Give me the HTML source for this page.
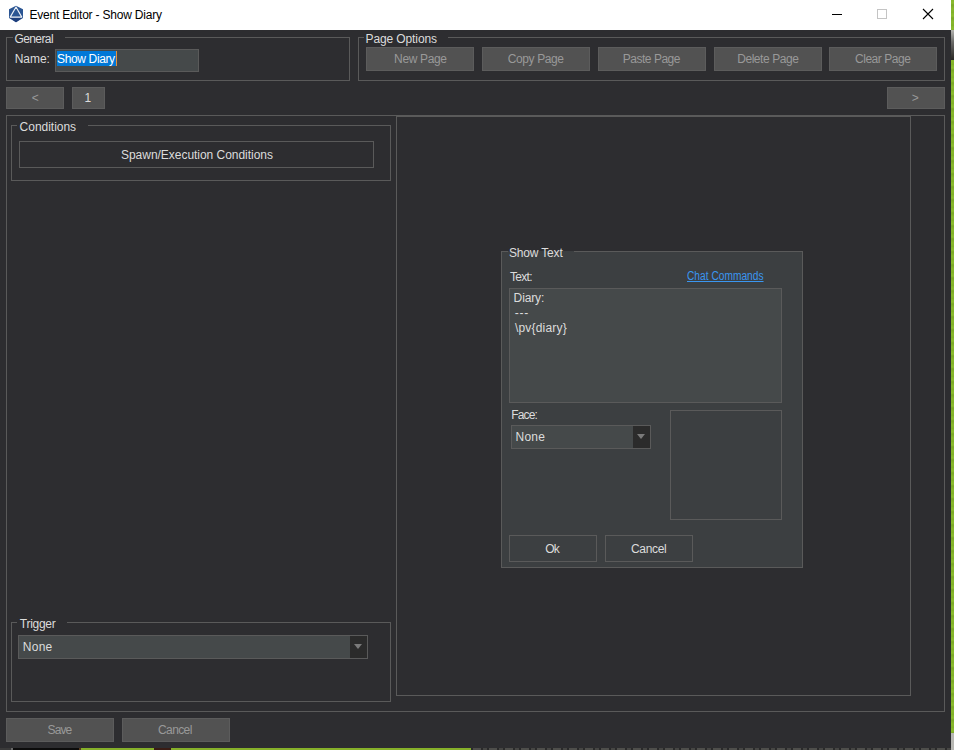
<!DOCTYPE html>
<html>
<head>
<meta charset="utf-8">
<title>Event Editor - Show Diary</title>
<style>
html,body{margin:0;padding:0;}
body{width:954px;height:750px;overflow:hidden;position:relative;background:#2d2d30;
  font-family:"Liberation Sans",sans-serif;font-size:12px;color:#dcdcdc;}
.abs{position:absolute;box-sizing:border-box;}
.t{white-space:nowrap;line-height:14px;height:14px;}
#win{left:0;top:0;width:951px;height:748px;background:#2d2d30;}
#title{left:0;top:0;width:951px;height:30px;background:#fff;}
.gb{border:1px solid #5a5a5a;}
.gap{height:1px;background:#2d2d30;}
.btn{border:1px solid #5a5a5a;background:#2d2d30;}
.btn.dis{background:#525252;border-color:#5c5c5c;}
.combo{background:#45494a;border:1px solid #5a5a5a;}
.arr{background:#2b2b2b;}
.tri{width:0;height:0;border-left:4.7px solid transparent;border-right:4.7px solid transparent;border-top:5.3px solid #7a7a7a;}
</style>
</head>
<body>
<!-- desktop peeking out behind the window -->
<div class="abs" style="left:951px;top:0;width:3px;height:750px;background:repeating-linear-gradient(180deg,#84b62a 0,#8cbc30 3px,#7aa826 5px,#88b82c 9px,#80b028 13px)"></div>
<div class="abs" style="left:951px;top:30px;width:3px;height:30px;background:linear-gradient(#b4b4b0,#6a6a68 40%,#2a2824)"></div>
<div class="abs" style="left:951px;top:733px;width:3px;height:17px;background:#b8b8b4"></div>
<div class="abs" style="left:0;top:748px;width:951px;height:2px;background:#3a3a3a"></div>
<div class="abs" style="left:11px;top:748px;width:2px;height:2px;background:#6a6a6a"></div>
<div class="abs" style="left:13px;top:748px;width:66px;height:2px;background:#0c0c0c"></div>
<div class="abs" style="left:79px;top:748px;width:2px;height:2px;background:#5a3a1c"></div>
<div class="abs" style="left:81px;top:748px;width:390px;height:2px;background:#86b02a"></div>
<div class="abs" style="left:154px;top:748px;width:17px;height:2px;background:#3a1c14"></div>
<div class="abs" style="left:471px;top:748px;width:480px;height:2px;background:repeating-linear-gradient(90deg,#2a2a2a 0,#2a2a2a 2px,#4e4e4b 2px,#4e4e4b 10px,#2a2a2a 10px,#2a2a2a 12px,#464644 12px,#464644 16px)"></div>

<div class="abs" id="win">
  <div class="abs" id="title">
    <svg class="abs" style="left:0;top:0" width="32" height="30" viewBox="0 0 32 30">
      <polygon points="16,5.7 23,9.2 23,17.9 16,22.2 9,17.9 9,9.2" fill="#2b5593"/>
      <polygon points="9.3,17.6 22.7,17.6 16,22.2" fill="#1f3f7c"/>
      <polygon points="16,7.0 21.8,17.1 10.2,17.1" fill="none" stroke="#edf1f7" stroke-width="1.15" stroke-linejoin="round"/>
    </svg>
    <svg class="abs" style="left:820px;top:0" width="131" height="30" viewBox="0 0 131 30">
      <path d="M12 14.5H22" stroke="#000" stroke-width="1" fill="none"/>
      <rect x="57.5" y="9.5" width="9" height="9" stroke="#c4c4c4" stroke-width="1" fill="none"/>
      <path d="M103 9L113 19M113 9L103 19" stroke="#000" stroke-width="1.1" fill="none"/>
    </svg>
  </div>

  <!-- General -->
  <div class="abs gb" style="left:6px;top:37px;width:344px;height:44px"></div>
  <div class="abs gap" style="left:13px;top:37px;width:52px"></div>
  <div class="abs" style="left:55px;top:49px;width:144px;height:23px;background:#45494a;border:1px solid #5a5a5a"></div>
  <div class="abs" style="left:57px;top:51px;width:59px;height:15px;background:#0078d7"></div>
  <div class="abs" style="left:116px;top:51px;width:1px;height:15px;background:#e8913a"></div>

  <!-- Page Options -->
  <div class="abs gb" style="left:358px;top:37px;width:587px;height:44px"></div>
  <div class="abs gap" style="left:364px;top:37px;width:84px"></div>
  <div class="abs btn dis" style="left:366px;top:47px;width:108px;height:24px"></div>
  <div class="abs btn dis" style="left:482px;top:47px;width:108px;height:24px"></div>
  <div class="abs btn dis" style="left:598px;top:47px;width:108px;height:24px"></div>
  <div class="abs btn dis" style="left:714px;top:47px;width:108px;height:24px"></div>
  <div class="abs btn dis" style="left:829px;top:47px;width:108px;height:24px"></div>

  <!-- pager -->
  <div class="abs btn dis" style="left:6px;top:87px;width:58px;height:22px"></div>
  <div class="abs btn dis" style="left:72px;top:87px;width:33px;height:22px"></div>
  <div class="abs btn dis" style="left:887px;top:87px;width:58px;height:22px"></div>

  <!-- main panel -->
  <div class="abs gb" style="left:6px;top:115px;width:939px;height:597px"></div>
  <div class="abs gb" style="left:396px;top:116px;width:515px;height:580px"></div>

  <!-- Conditions -->
  <div class="abs gb" style="left:11px;top:125px;width:380px;height:56px"></div>
  <div class="abs gap" style="left:17px;top:125px;width:71px"></div>
  <div class="abs btn" style="left:19px;top:141px;width:355px;height:27px"></div>

  <!-- Trigger -->
  <div class="abs gb" style="left:11px;top:622px;width:380px;height:80px"></div>
  <div class="abs gap" style="left:17px;top:622px;width:50px"></div>
  <div class="abs combo" style="left:18px;top:635px;width:350px;height:24px"></div>
  <div class="abs arr" style="left:350px;top:636px;width:17px;height:22px"></div>
  <div class="abs tri" style="left:354px;top:644px"></div>

  <!-- bottom buttons -->
  <div class="abs btn dis" style="left:6px;top:718px;width:108px;height:24px"></div>
  <div class="abs btn dis" style="left:122px;top:718px;width:108px;height:24px"></div>

  <!-- dialog -->
  <div class="abs" style="left:501px;top:251px;width:302px;height:317px;background:#3c3f41;border:1px solid #5a5a5a"></div>
  <div class="abs gap" style="left:508px;top:251px;width:66px;background:#3c3f41"></div>
  <div class="abs" style="left:509px;top:288px;width:273px;height:115px;background:#45494a;border:1px solid #5a5a5a"></div>
  <div class="abs combo" style="left:511px;top:425px;width:140px;height:24px"></div>
  <div class="abs arr" style="left:633px;top:426px;width:17px;height:22px"></div>
  <div class="abs tri" style="left:636.8px;top:434px"></div>
  <div class="abs gb" style="left:670px;top:410px;width:112px;height:110px"></div>
  <div class="abs btn" style="left:509px;top:535px;width:88px;height:27px;background:#3c3f41"></div>
  <div class="abs btn" style="left:605px;top:535px;width:88px;height:27px;background:#3c3f41"></div>
  <div class="abs t" id="t_chat" style="left:686.5px;top:269px;color:#3a96f0;text-decoration:underline;transform:scaleX(0.85);transform-origin:0 0">Chat Commands</div>

<div class="abs t" id="t_title" style="left:29.40px;top:8.00px;color:#000;letter-spacing:-0.195px;">Event Editor - Show Diary</div>
<div class="abs t" id="t_general" style="left:14.40px;top:32.00px;color:#dcdcdc;letter-spacing:-0.583px;">General</div>
<div class="abs t" id="t_name" style="left:14.70px;top:52.00px;color:#dcdcdc;letter-spacing:-0.025px;">Name:</div>
<div class="abs t" id="t_showdiary" style="left:57.10px;top:52.00px;color:#fff;letter-spacing:-0.370px;">Show Diary</div>
<div class="abs t" id="t_pageopt" style="left:365.50px;top:32.00px;color:#dcdcdc;letter-spacing:-0.109px;">Page Options</div>
<div class="abs t" id="t_newpage" style="left:394.10px;top:52.00px;color:#999999;letter-spacing:-0.357px;">New Page</div>
<div class="abs t" id="t_copypage" style="left:507.80px;top:52.00px;color:#999999;letter-spacing:-0.400px;">Copy Page</div>
<div class="abs t" id="t_pastepage" style="left:622.80px;top:52.00px;color:#999999;letter-spacing:-0.489px;">Paste Page</div>
<div class="abs t" id="t_deletepage" style="left:737.20px;top:52.00px;color:#999999;letter-spacing:-0.440px;">Delete Page</div>
<div class="abs t" id="t_clearpage" style="left:855.00px;top:52.00px;color:#999999;letter-spacing:-0.467px;">Clear Page</div>
<div class="abs t" id="t_lt" style="left:31.80px;top:91.00px;color:#999999;letter-spacing:0.000px;">&lt;</div>
<div class="abs t" id="t_one" style="left:84.50px;top:91.00px;color:#dcdcdc;letter-spacing:0.000px;">1</div>
<div class="abs t" id="t_gt" style="left:911.80px;top:91.00px;color:#999999;letter-spacing:0.000px;">&gt;</div>
<div class="abs t" id="t_conditions" style="left:19.60px;top:120.00px;color:#dcdcdc;letter-spacing:-0.022px;">Conditions</div>
<div class="abs t" id="t_spawn" style="left:121.00px;top:148.00px;color:#dcdcdc;letter-spacing:-0.032px;">Spawn/Execution Conditions</div>
<div class="abs t" id="t_trigger" style="left:19.80px;top:617.00px;color:#dcdcdc;letter-spacing:-0.267px;">Trigger</div>
<div class="abs t" id="t_none1" style="left:22.80px;top:640.00px;color:#dcdcdc;letter-spacing:0.267px;">None</div>
<div class="abs t" id="t_save" style="left:47.60px;top:723.00px;color:#999999;letter-spacing:-0.933px;">Save</div>
<div class="abs t" id="t_cancel1" style="left:158.00px;top:723.00px;color:#999999;letter-spacing:-0.600px;">Cancel</div>
<div class="abs t" id="t_showtext" style="left:508.90px;top:246.00px;color:#dcdcdc;letter-spacing:-0.162px;">Show Text</div>
<div class="abs t" id="t_textlbl" style="left:509.90px;top:270.00px;color:#dcdcdc;letter-spacing:-0.675px;">Text:</div>
<div class="abs t" id="t_diary" style="left:513.60px;top:291.00px;color:#dcdcdc;letter-spacing:-0.120px;">Diary:</div>
<div class="abs t" id="t_dashes" style="left:514.80px;top:306.00px;color:#dcdcdc;letter-spacing:0.700px;">---</div>
<div class="abs t" id="t_pv" style="left:515.00px;top:321.00px;color:#dcdcdc;letter-spacing:0.178px;">\pv{diary}</div>
<div class="abs t" id="t_face" style="left:511.30px;top:408.00px;color:#dcdcdc;letter-spacing:-0.875px;">Face:</div>
<div class="abs t" id="t_none2" style="left:515.60px;top:430.00px;color:#dcdcdc;letter-spacing:0.200px;">None</div>
<div class="abs t" id="t_ok" style="left:545.30px;top:542.00px;color:#dcdcdc;letter-spacing:-1.000px;">Ok</div>
<div class="abs t" id="t_cancel2" style="left:630.90px;top:542.00px;color:#dcdcdc;letter-spacing:-0.300px;">Cancel</div>
</div>
</body>
</html>
